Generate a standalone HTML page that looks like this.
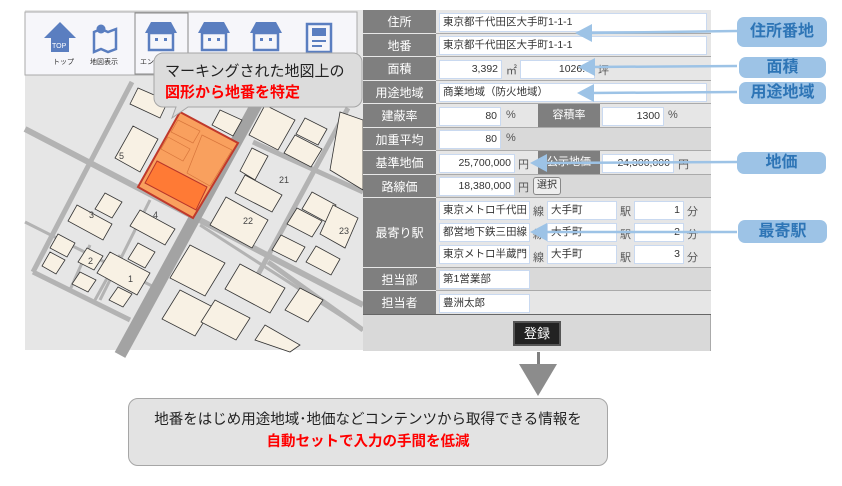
<!DOCTYPE html>
<html><head><meta charset="utf-8"><style>
*{margin:0;padding:0;box-sizing:border-box}
body{width:842px;height:486px;background:#fff;position:relative;overflow:hidden;font-family:"Liberation Sans","Noto Sans CJK JP",sans-serif}
.a{position:absolute}
.lb{position:absolute;left:363px;width:73px;background:#7f7f7f;color:#fff;font-size:12px;display:flex;align-items:center;justify-content:center;border-bottom:1px solid #e8e8e8}
.row{position:absolute;left:436px;width:275px;background:#e6e6e6;border-bottom:1px solid #aaa}
.in{position:absolute;background:#fff;border:1px solid #c9d9f0;font-size:10.5px;color:#333;height:19px;line-height:17px;padding:0 3px;white-space:nowrap;overflow:hidden}
.r{text-align:right}
.u{position:absolute;font-size:11px;color:#555}
.dl{position:absolute;background:#7f7f7f;color:#fff;font-size:11px;text-align:center;line-height:23px;height:23px}
.tag{position:absolute;background:#9dc3e6;color:#2e75b6;font-weight:bold;font-size:16px;border-radius:7px;text-align:center}
</style></head><body>

<svg class="a" style="left:0;top:0" width="842" height="486">
 <rect x="25" y="10" width="338" height="340" fill="#e6e6e6"/>
 <g stroke="#b3b3b3" fill="none" stroke-linecap="butt">
  <line x1="25" y1="129" x2="363" y2="305" stroke-width="6"/>
  <line x1="253" y1="142" x2="363" y2="192" stroke-width="5"/>
  <line x1="348" y1="108" x2="255" y2="280" stroke-width="5"/>
  <line x1="132" y1="82" x2="33" y2="272" stroke-width="5"/>
  <line x1="25" y1="222" x2="160" y2="290" stroke-width="3"/>
  <line x1="90" y1="245" x2="70" y2="290" stroke-width="3"/>
  <line x1="120" y1="255" x2="95" y2="300" stroke-width="3"/>
  <line x1="33" y1="272" x2="130" y2="320" stroke-width="5"/>
  <line x1="150" y1="200" x2="100" y2="300" stroke-width="3"/>
  <line x1="200" y1="225" x2="363" y2="330" stroke-width="3"/>
  <line x1="268" y1="262" x2="363" y2="330" stroke-width="5"/>
 </g>
 <line x1="278" y1="65" x2="120" y2="355" stroke="#a3a3a3" stroke-width="12"/>
 <g fill="#f8f1e4" stroke="#333" stroke-width="0.8">
  <polygon points="138,88 168,101 160,118 130,104"/>
  <polygon points="133,126 158,139 140,172 115,158"/>
  <polygon points="220,110 242,120 233,136 212,125"/>
  <polygon points="265,105 295,120 278,150 249,135"/>
  <polygon points="305,118 327,129 318,145 296,134"/>
  <polygon points="295,135 322,149 311,167 284,153"/>
  <polygon points="340,112 363,120 363,190 330,170"/>
  <polygon points="252,148 268,156 255,180 240,171"/>
  <polygon points="245,175 282,195 272,212 235,193"/>
  <polygon points="226,197 268,220 252,248 210,225"/>
  <polygon points="312,192 336,205 326,222 302,209"/>
  <polygon points="297,208 322,221 312,237 287,224"/>
  <polygon points="333,205 358,218 345,248 320,234"/>
  <polygon points="281,235 305,247 296,262 272,250"/>
  <polygon points="316,246 340,259 331,275 306,262"/>
  <polygon points="105,193 122,202 112,218 95,209"/>
  <polygon points="77,205 112,224 103,240 68,221"/>
  <polygon points="140,210 175,229 165,245 130,226"/>
  <polygon points="138,243 155,252 145,268 128,259"/>
  <polygon points="58,234 75,243 67,257 50,248"/>
  <polygon points="50,252 65,260 56,274 42,266"/>
  <polygon points="87,248 103,256 94,270 78,262"/>
  <polygon points="110,252 150,273 137,295 97,273"/>
  <polygon points="80,272 96,280 88,292 72,284"/>
  <polygon points="118,287 132,294 123,307 109,300"/>
  <polygon points="190,245 225,263 205,296 170,278"/>
  <polygon points="240,264 285,288 270,313 225,289"/>
  <polygon points="300,288 323,300 308,322 285,310"/>
  <polygon points="180,290 213,307 195,336 162,319"/>
  <polygon points="215,300 250,318 236,340 201,322"/>
  <polygon points="265,325 300,345 290,352 255,340"/>
 </g>
 <g font-size="9" fill="#444" font-family="Liberation Sans,sans-serif">
  <text x="119" y="159">5</text><text x="279" y="183">21</text><text x="243" y="224">22</text><text x="339" y="234">23</text>
  <text x="89" y="218">3</text><text x="153" y="218">4</text><text x="88" y="264">2</text><text x="128" y="282">1</text>
 </g>
 <polygon points="180,112 238,143 193,218 138,187" fill="#f9a05e" stroke="#c0392b" stroke-width="2"/>
 <g fill="none" stroke="#d8763c" stroke-width="0.7">
  <polygon points="178,120 200,131 193,143 171,132"/><polygon points="168,137 190,149 183,161 161,149"/><polygon points="202,135 232,150 210,186 187,173"/>
 </g>
 <polygon points="157,161 207,187 196,210 145,183" fill="#ff7a35" stroke="#b8362a" stroke-width="1"/>
 <rect x="25" y="12" width="332" height="63" fill="#f6f6fa" stroke="#aaa"/>
 <rect x="135" y="13" width="53" height="61" fill="#f6f6fa" stroke="#888"/>
 <g fill="#5a7ec0">
  <polygon points="60,22 76,38 69,38 69,52 51,52 51,38 44,38"/>
  <path d="M94 32 l7-3 7 3 8-3 v20 l-8 3-7-3-7 3z" fill="none" stroke="#5a7ec0" stroke-width="2.5"/>
  <circle cx="101" cy="29" r="4.5"/>
  <g id="h"><polygon points="145,33 151,22 171,22 177,33"/><rect x="149" y="33" width="24" height="17" fill="none" stroke="#5a7ec0" stroke-width="2.5"/><rect x="155" y="38" width="3" height="3"/><rect x="164" y="38" width="3" height="3"/></g>
  <use href="#h" x="53"/><use href="#h" x="105"/>
  <rect x="307" y="24" width="24" height="28" fill="none" stroke="#5a7ec0" stroke-width="2.5"/>
  <rect x="312" y="28" width="14" height="8"/><rect x="312" y="40" width="14" height="2"/><rect x="312" y="45" width="10" height="2"/>
 </g>
 <text x="52" y="48" font-size="7" fill="#fff">TOP</text>
 <text x="53" y="64" font-size="7" fill="#333" font-family="Noto Sans CJK JP,sans-serif">トップ</text>
 <text x="90" y="64" font-size="7" fill="#333" font-family="Noto Sans CJK JP,sans-serif">地図表示</text>
 <text x="140" y="64" font-size="7" fill="#333" font-family="Noto Sans CJK JP,sans-serif">エン</text>
 <path d="M163 53 h190 a9 9 0 0 1 9 9 v36 a9 9 0 0 1 -9 9 h-165 l-16 11 4-11 h-13 a9 9 0 0 1 -9-9 v-36 a9 9 0 0 1 9-9z" fill="#dcdcdc" stroke="#a6a6a6"/>
 <text x="165" y="76" font-size="15" fill="#222" font-family="Noto Sans CJK JP,sans-serif">マーキングされた地図上の</text>
 <text x="165" y="97" font-size="15" font-weight="bold" fill="#ff0000" font-family="Noto Sans CJK JP,sans-serif">図形から地番を特定</text>
</svg>

<div class="a" style="left:363px;top:10px;width:348px;height:341px;background:#d9d9d9;border-right:1px solid #aaa"></div>
<div class="lb" style="top:10px;height:24px">住所</div><div class="row" style="top:10px;height:24px"><div class="in" style="left:3px;top:3px;width:268px">東京都千代田区大手町1-1-1</div></div>
<div class="lb" style="top:34px;height:23px">地番</div><div class="row" style="top:34px;height:23px"><div class="in" style="left:3px;top:2px;width:268px">東京都千代田区大手町1-1-1</div></div>
<div class="lb" style="top:57px;height:24px">面積</div><div class="row" style="top:57px;height:24px"><div class="in r" style="left:3px;top:3px;width:63px">3,392</div><span class="u" style="left:70px;top:5px">㎡</span><div class="in r" style="left:84px;top:3px;width:75px">1026.0</div><span class="u" style="left:162px;top:5px">坪</span></div>
<div class="lb" style="top:81px;height:23px">用途地域</div><div class="row" style="top:81px;height:23px"><div class="in" style="left:3px;top:2px;width:268px">商業地域（防火地域）</div></div>
<div class="lb" style="top:104px;height:24px">建蔽率</div><div class="row" style="top:104px;height:24px"><div class="in r" style="left:3px;top:3px;width:62px">80</div><span class="u" style="left:70px;top:5px">%</span><div class="dl" style="left:102px;top:0;width:62px">容積率</div><div class="in r" style="left:166px;top:3px;width:62px">1300</div><span class="u" style="left:232px;top:5px">%</span></div>
<div class="lb" style="top:128px;height:23px">加重平均</div><div class="row" style="top:128px;height:23px;background:#d9d9d9"><div class="in r" style="left:3px;top:2px;width:62px">80</div><span class="u" style="left:70px;top:4px">%</span></div>
<div class="lb" style="top:151px;height:24px">基準地価</div><div class="row" style="top:151px;height:24px"><div class="in r" style="left:3px;top:3px;width:76px">25,700,000</div><span class="u" style="left:82px;top:5px">円</span><div class="dl" style="left:102px;top:0;width:62px">公示地価</div><div class="in r" style="left:166px;top:3px;width:72px">24,300,000</div><span class="u" style="left:242px;top:5px">円</span></div>
<div class="lb" style="top:175px;height:23px">路線価</div><div class="row" style="top:175px;height:23px;background:#d9d9d9"><div class="in r" style="left:3px;top:2px;width:76px">18,380,000</div><span class="u" style="left:82px;top:4px">円</span><div class="a" style="left:97px;top:2px;width:28px;height:18px;border:1px solid #888;border-radius:3px;background:#eee;font-size:10px;text-align:center;line-height:16px;color:#333">選択</div></div>
<div class="lb" style="top:198px;height:70px">最寄り駅</div><div class="row" style="top:198px;height:70px">
 <div class="in" style="left:3px;top:3px;width:91px">東京メトロ千代田</div><span class="u" style="left:97px;top:5px">線</span><div class="in" style="left:111px;top:3px;width:70px">大手町</div><span class="u" style="left:184px;top:5px">駅</span><div class="in r" style="left:198px;top:3px;width:50px">1</div><span class="u" style="left:251px;top:5px">分</span>
 <div class="in" style="left:3px;top:25px;width:91px">都営地下鉄三田線</div><span class="u" style="left:97px;top:28px">線</span><div class="in" style="left:111px;top:25px;width:70px">大手町</div><span class="u" style="left:184px;top:28px">駅</span><div class="in r" style="left:198px;top:25px;width:50px">2</div><span class="u" style="left:251px;top:28px">分</span>
 <div class="in" style="left:3px;top:47px;width:91px">東京メトロ半蔵門</div><span class="u" style="left:97px;top:51px">線</span><div class="in" style="left:111px;top:47px;width:70px">大手町</div><span class="u" style="left:184px;top:51px">駅</span><div class="in r" style="left:198px;top:47px;width:50px">3</div><span class="u" style="left:251px;top:51px">分</span>
</div>
<div class="lb" style="top:268px;height:23px">担当部</div><div class="row" style="top:268px;height:23px;background:#d9d9d9"><div class="in" style="left:3px;top:2px;width:91px">第1営業部</div></div>
<div class="lb" style="top:291px;height:24px">担当者</div><div class="row" style="top:291px;height:24px"><div class="in" style="left:3px;top:3px;width:91px">豊洲太郎</div></div>
<div class="a" style="left:363px;top:314px;width:348px;height:1px;background:#666"></div>
<div class="a" style="left:513px;top:321px;width:48px;height:25px;background:#222;border:2px solid #555;color:#fff;font-size:13px;text-align:center;line-height:21px">登録</div>

<svg class="a" style="left:0;top:0" width="842" height="486">
 <g stroke="#9dc3e6" stroke-width="2.5" fill="#9dc3e6">
  <line x1="737" y1="31" x2="585" y2="33"/><polygon points="575,33 592,24 592,42" stroke="none"/>
  <line x1="737" y1="66" x2="590" y2="67"/><polygon points="578,67 595,58 595,76" stroke="none"/>
  <line x1="737" y1="92" x2="590" y2="93"/><polygon points="577,93 594,84 594,102" stroke="none"/>
  <line x1="737" y1="162" x2="542" y2="163"/><polygon points="530,163 547,154 547,172" stroke="none"/>
  <line x1="737" y1="232" x2="542" y2="232"/><polygon points="530,232 547,223 547,241" stroke="none"/>
 </g>
 <rect x="537" y="352" width="3" height="14" fill="#7f7f7f"/>
 <polygon points="519,364 557,364 538,396" fill="#8c8c8c"/>
</svg>
<div class="tag" style="left:737px;top:17px;width:90px;height:30px;line-height:30px">住所番地</div>
<div class="tag" style="left:739px;top:57px;width:87px;height:21px;line-height:21px">面積</div>
<div class="tag" style="left:739px;top:82px;width:87px;height:22px;line-height:22px">用途地域</div>
<div class="tag" style="left:737px;top:152px;width:89px;height:22px;line-height:22px">地価</div>
<div class="tag" style="left:738px;top:220px;width:89px;height:23px;line-height:23px">最寄駅</div>

<div class="a" style="left:128px;top:398px;width:480px;height:68px;background:#e3e3e3;border:1px solid #a6a6a6;border-radius:10px;text-align:center;font-size:14.5px;color:#222;padding-top:10px;line-height:22px">地番をはじめ用途地域･地価などコンテンツから取得できる情報を<br><b style="color:#ff0000">自動セットで入力の手間を低減</b></div>
</body></html>
